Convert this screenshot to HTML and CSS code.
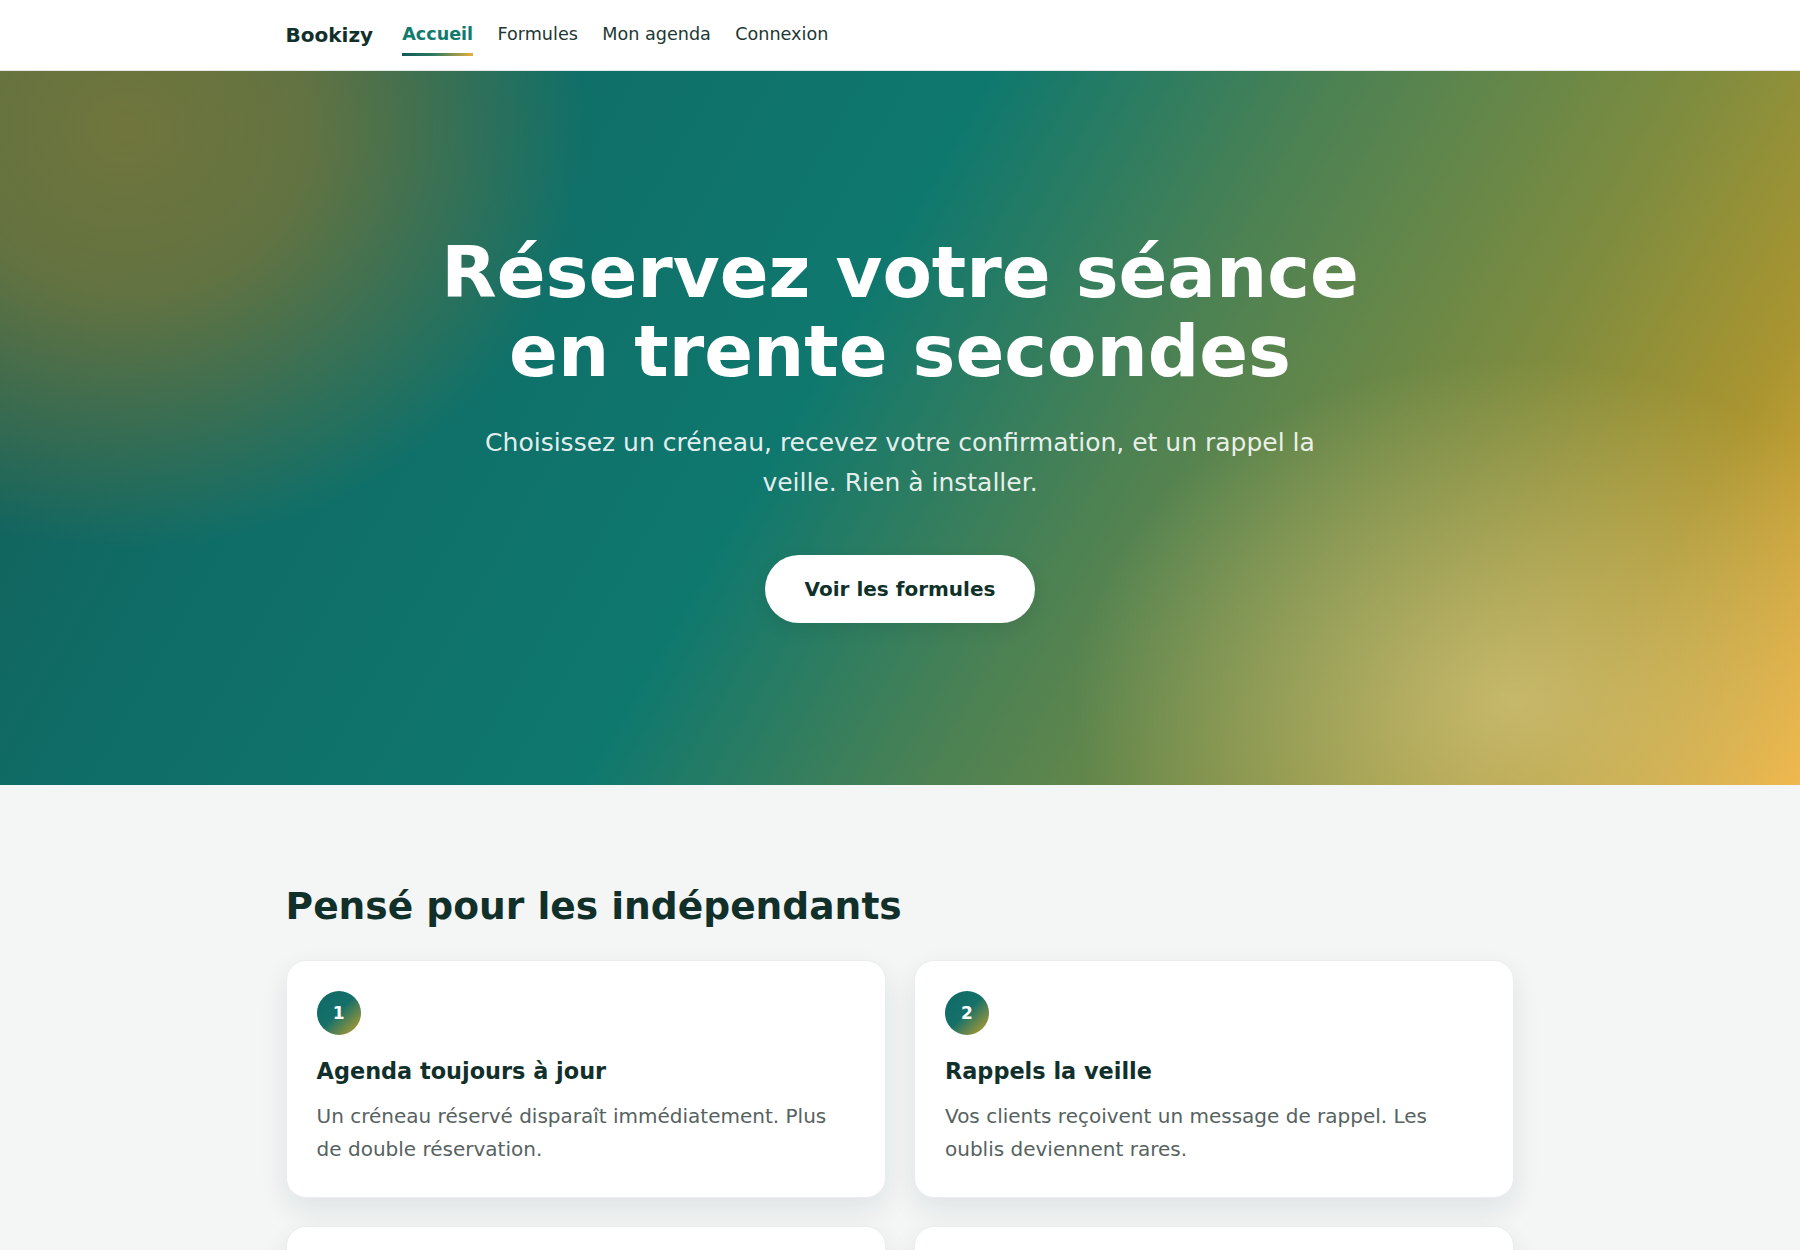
FILE: index.html
```html
<!DOCTYPE html>
<html lang="fr">
<head>
    <meta charset="UTF-8">
    <meta name="viewport" content="width=device-width, initial-scale=1.0">
    <title>Bookizy</title>
    <link rel="stylesheet" href="styles.css">
</head>
<body>
    <header class="topbar">
        <nav class="topbar-inner">
            <a class="brand" href="#">Bookizy</a>
            <div class="menu">
                <a class="menu-link active" href="#">Accueil</a>
                <a class="menu-link" href="#">Formules</a>
                <a class="menu-link" href="#">Mon agenda</a>
                <a class="menu-link" href="#">Connexion</a>
            </div>
        </nav>
    </header>

    <section class="hero">
        <div class="hero-content">
            <h1 class="hero-title">Réservez votre séance en trente secondes</h1>
            <p class="hero-text">Choisissez un créneau, recevez votre confirmation, et un rappel la veille. Rien à installer.</p>
            <a class="hero-btn" href="#">Voir les formules</a>
        </div>
    </section>

    <section class="features">
        <div class="container">
            <h2 class="features-title">Pensé pour les indépendants</h2>
            <div class="features-grid">
                <div class="feature-card">
                    <span class="feature-num">1</span>
                    <h3 class="feature-name">Agenda toujours à jour</h3>
                    <p class="feature-text">Un créneau réservé disparaît immédiatement. Plus de double réservation.</p>
                </div>
                <div class="feature-card">
                    <span class="feature-num">2</span>
                    <h3 class="feature-name">Rappels la veille</h3>
                    <p class="feature-text">Vos clients reçoivent un message de rappel. Les oublis deviennent rares.</p>
                </div>
                <div class="feature-card">
                    <span class="feature-num">3</span>
                    <h3 class="feature-name">Paiement en ligne</h3>
                    <p class="feature-text">Acompte ou paiement complet au moment de la réservation.</p>
                </div>
                <div class="feature-card">
                    <span class="feature-num">4</span>
                    <h3 class="feature-name">Sans installation</h3>
                    <p class="feature-text">Tout se passe dans le navigateur, sur ordinateur comme sur mobile.</p>
                </div>
            </div>
        </div>
    </section>
</body>
</html>
```

FILE: styles.css
```css
* {
    box-sizing: border-box;
}

body {
    margin: 0;
    font-family: "DejaVu Sans", "Noto Sans", sans-serif;
    line-height: 1.5;
    color: #10302a;
    background-color: #f4f5f5;
}

a {
    text-decoration: none;
    color: inherit;
}

/* Шапка */
.topbar {
    background-color: #ffffff;
    border-bottom: 1px solid #e3e7e6;
}

.topbar-inner {
    max-width: 1280px;
    height: 70px;
    margin: 0 auto;
    padding: 0 25.6px;
    display: flex;
    align-items: center;
    gap: 29px;
}

.brand {
    font-size: 20px;
    font-weight: 700;
    color: #12302b;
    margin-bottom: 1px;
}

.menu {
    display: flex;
    gap: 24.4px;
}

.menu-link {
    font-size: 17.6px;
    color: #1d3833;
    padding: 7px 0 8px;
}

.menu-link.active {
    font-weight: 700;
    color: #117a6e;
    background-image: linear-gradient(90deg, #0f5a58, #2f7a62 45%, #e6b03c);
    background-size: 100% 3px;
    background-position: left bottom;
    background-repeat: no-repeat;
}

/* Hero */
.hero {
    padding: 162px 24px;
    background:
        radial-gradient(ellipse 460px 420px at 7% 8%, rgba(112, 117, 60, 1) 0%, rgba(112, 117, 60, 0.85) 40%, rgba(112, 117, 60, 0) 100%),
        radial-gradient(ellipse 440px 340px at 84% 88%, rgba(220, 204, 136, 0.65) 0%, rgba(220, 204, 136, 0) 100%),
        linear-gradient(120deg, #1a6058 0%, #12655f 12%, #0f6d67 22%, #0f786e 45%, #4a8154 60%, #7e8c3f 77%, #aa9530 88%, #f5b33f 100%);
}

.hero-content {
    display: flex;
    flex-direction: column;
    align-items: center;
    text-align: center;
}

.hero-title {
    margin: 0;
    max-width: 1000px;
    font-size: 72px;
    line-height: 1.1;
    font-weight: 700;
    color: #ffffff;
}

.hero-text {
    margin: 32px 0 52px;
    max-width: 860px;
    font-size: 25px;
    line-height: 1.6;
    color: rgba(255, 255, 255, 0.9);
}

.hero-btn {
    padding: 19px 40px;
    font-size: 20px;
    font-weight: 700;
    color: #10302a;
    background-color: #ffffff;
    border-radius: 999px;
    box-shadow: 0 6px 18px rgba(0, 0, 0, 0.08);
}

/* Преимущества */
.features {
    padding: 99px 0 80px;
}

.container {
    max-width: 1280px;
    margin: 0 auto;
    padding: 0 25.6px;
}

.features-title {
    margin: 0 0 31px;
    font-size: 37.6px;
    line-height: 1.2;
    font-weight: 700;
    color: #11302a;
}

.features-grid {
    display: grid;
    grid-template-columns: 1fr 1fr;
    gap: 28px;
}

.feature-card {
    padding: 30px 30px 31px;
    background-color: #ffffff;
    border: 1px solid #eaeded;
    border-radius: 20px;
    box-shadow: 0 12px 28px rgba(20, 70, 66, 0.09);
}

.feature-num {
    width: 44px;
    height: 44px;
    margin-bottom: 22px;
    display: flex;
    align-items: center;
    justify-content: center;
    border-radius: 50%;
    font-size: 17px;
    font-weight: 700;
    color: #ffffff;
    background: linear-gradient(135deg, #0f6864 0%, #15706a 48%, #c9a228 100%);
}

.feature-name {
    margin: 0 0 13px;
    font-size: 22.4px;
    line-height: 1.3;
    font-weight: 700;
    color: #12302b;
}

.feature-text {
    margin: 0;
    max-width: 530px;
    font-size: 20px;
    line-height: 1.65;
    color: #56625f;
}
```
